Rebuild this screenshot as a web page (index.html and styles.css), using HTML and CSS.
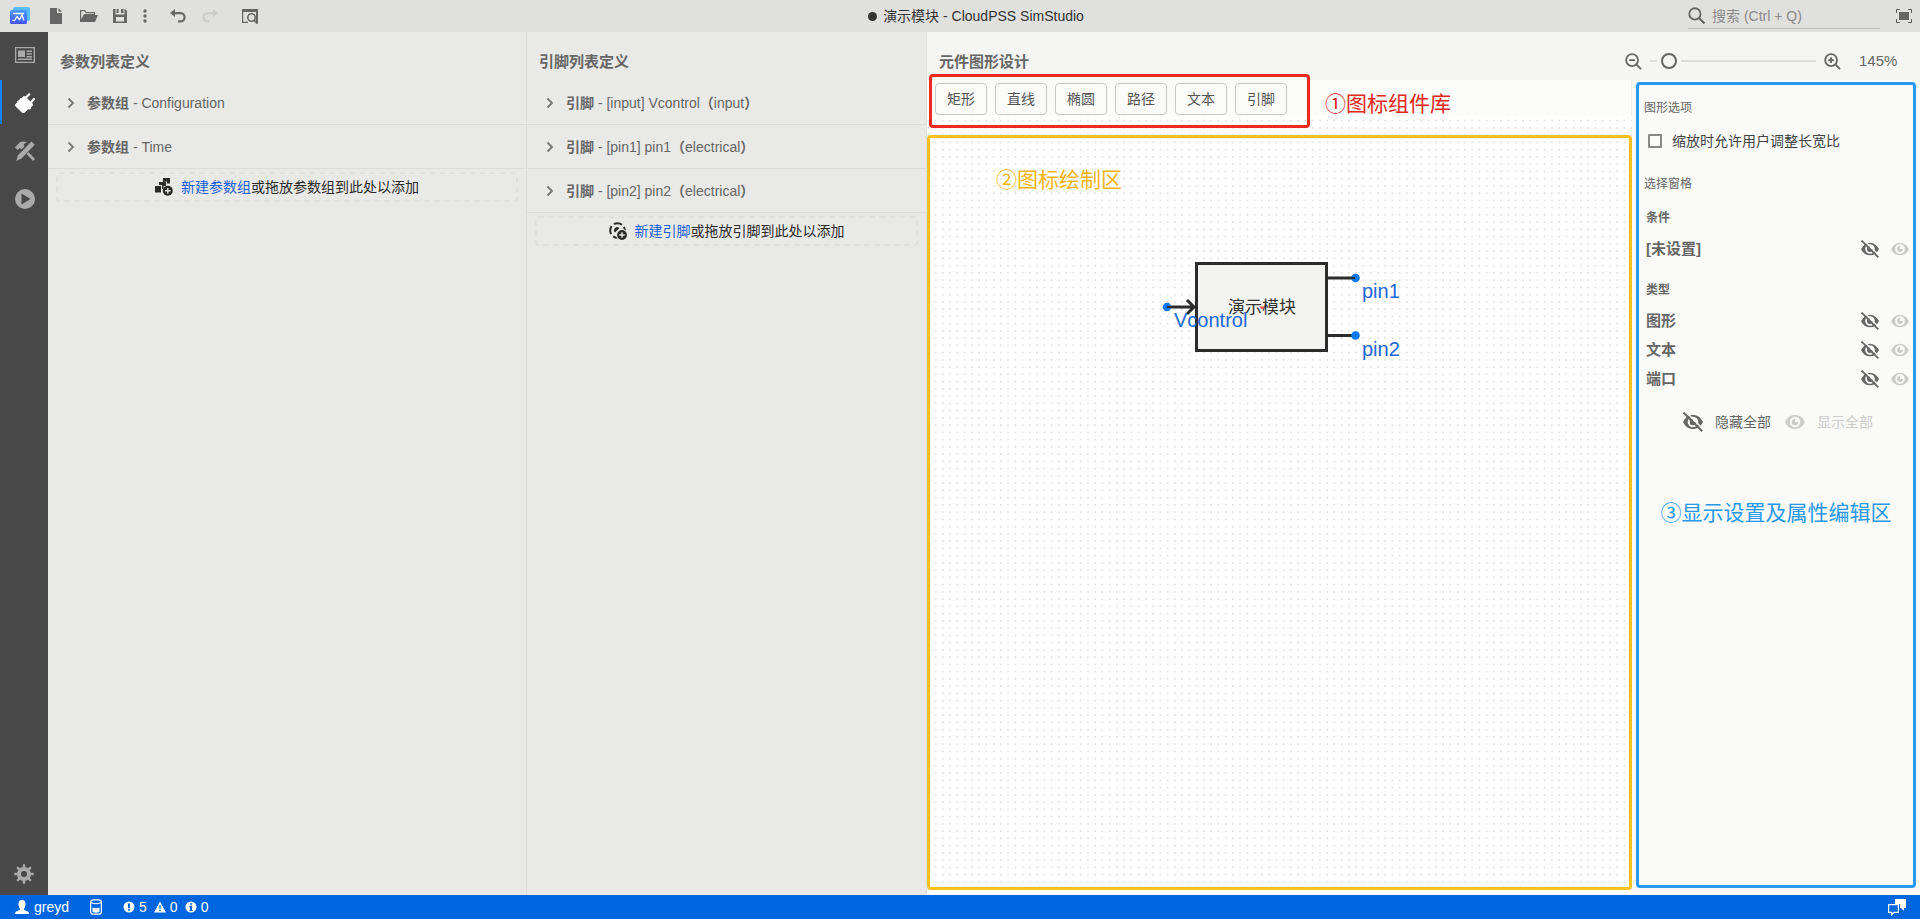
FILE: index.html
```html
<!DOCTYPE html>
<html lang="zh-CN">
<head>
<meta charset="utf-8">
<title>演示模块 - CloudPSS SimStudio</title>
<link rel="stylesheet" href="styles.css">
</head>
<body>
<svg class="sprite" aria-hidden="true">
  <symbol id="eye" viewBox="0 0 18 18">
    <path fill-rule="evenodd" d="M0 9C2 5 5 2.700 9 2.700S16 5 18 9c-2 4-5 6.300-9 6.300S2 13 0 9zM9 4.200a4.800 4.800 0 1 0 0 9.600 4.800 4.800 0 0 0 0-9.600z"/>
    <path d="M9 6v3h3A3 3 0 1 1 9 6z"/>
  </symbol>
  <symbol id="eye-off" viewBox="0 0 18 18">
    <use href="#eye"/>
    <path d="M2 -.7 18.500 15.800" stroke="#fafaf9" stroke-width="1.300"/>
    <path d="M.5.500 17.300 17.300" stroke="currentColor" stroke-width="1.800"/>
  </symbol>
  <symbol id="chevron" viewBox="0 0 8 12">
    <path d="M1.500 1.500 6 6l-4.500 4.500" fill="none" stroke="currentColor" stroke-width="1.800"/>
  </symbol>
</svg>

<div class="app">
  <header class="topbar">
    <nav class="tools" aria-label="工具栏">
      <svg class="logo" viewBox="0 0 20 18">
        <defs><linearGradient id="lg" x2="0" y2="1"><stop stop-color="#4a9bff"/><stop offset="1" stop-color="#4452f0"/></linearGradient></defs>
        <rect x="3" width="17" height="14" rx="2" fill="#56bdf9"/>
        <rect y="3" width="17" height="14" rx="1.500" fill="url(#lg)"/>
        <path d="M3 6.500h11M2.500 13.500h2l2.500-4 2.500 3 2.500-4.500 2 5.500" fill="none" stroke="#fff" stroke-width="1.300"/>
      </svg>
      <button class="tool new" aria-label="新建"><svg viewBox="0 0 16 16"><path d="M2 0h7v5h5v11H2zM10.500 0 14 3.700h-3.500z"/></svg></button>
      <button class="tool open" aria-label="打开"><svg viewBox="0 0 18 16"><path fill-rule="evenodd" d="M0 14V2h5l1.500 2H15v3h3l-3 7zM1.200 11.500 4 6h9.800V5.200H6L4.500 3.200H1.200z"/></svg></button>
      <button class="tool save" aria-label="保存"><svg viewBox="0 0 16 16"><path fill-rule="evenodd" d="M1 1h2.500v5.500h9V1H13l2 2v12H1zM4 9v4.500h8V9zM4.500 1h2v4h-2zM9 1h2.500v4H9z"/></svg></button>
      <button class="tool more" aria-label="更多"><svg viewBox="0 0 16 16"><circle cx="8" cy="3" r="1.700"/><circle cx="8" cy="8" r="1.700"/><circle cx="8" cy="13" r="1.700"/></svg></button>
      <button class="tool undo" aria-label="撤销"><svg viewBox="0 0 16 16"><path d="M0 5 5 1v8zM4 4h6.500a5.200 5.200 0 0 1 0 10.400H8v-2.200h2.500a3 3 0 0 0 0-6H4z"/></svg></button>
      <button class="tool redo" aria-label="重做" disabled><svg viewBox="0 0 16 16"><path d="M16 5 11 1v8zM12 4H5.500a5.200 5.200 0 0 0 0 10.400H7v-2.200H5.500a3 3 0 0 1 0-6H12z"/></svg></button>
      <button class="tool inspect" aria-label="预览"><svg viewBox="0 0 18 16"><path fill-rule="evenodd" d="M1 1h16v14h-2V4H2.200v9.800H7V15H1z"/><circle cx="10.500" cy="9.500" r="3.700" fill="none" stroke="currentColor" stroke-width="1.600"/><path d="m13 12 3.500 3.700" stroke="currentColor" stroke-width="1.800"/></svg></button>
    </nav>
    <h1 class="doc-title"><span class="dirty"></span>演示模块 - CloudPSS SimStudio</h1>
    <div class="top-right">
      <label class="search">
        <svg viewBox="0 0 16 16"><circle cx="6.500" cy="6.500" r="5.300" fill="none" stroke="currentColor" stroke-width="1.700"/><path d="m10.500 10.500 5 5" stroke="currentColor" stroke-width="2"/></svg>
        <input type="text" placeholder="搜索 (Ctrl + Q)" aria-label="搜索">
      </label>
      <button class="full" aria-label="全屏"><svg viewBox="0 0 16 14"><path d="M.5 4V.5H4M12 .5h3.500V4M15.500 10v3.500H12M4 13.500H.5V10" fill="none" stroke="currentColor" stroke-width="1.200"/><path d="M3 3h10v8H3z"/></svg></button>
    </div>
  </header>

  <div class="main">
    <nav class="rail" aria-label="导航">
      <button class="rail-item" aria-label="总览"><svg viewBox="0 0 20 20"><path fill-rule="evenodd" d="M0 2h20v16H0zm1.300 1.300v13.400h17.400V3.300z"/><path d="M3 5.500h7V12H3zM11.500 5.500H17V7h-5.500zM11.500 8.200H17v1.500h-5.500zM11.500 11H17v1.500h-5.500zM3 13.500h14V15H3z"/></svg></button>
      <button class="rail-item active" aria-label="接口"><svg viewBox="0 0 20 20"><path d="M5.500 5.500h1.500L8.500 3.500h1.500L17.500 11v1.500L15.500 14v2H13L9 19.700H7.500L.5 13v-1.500L2.500 9.500V8h1.500z" stroke="currentColor" stroke-width=".8" stroke-linejoin="round"/><path d="m10.500 5 3.700-3.700M15.500 10 19 6" fill="none" stroke="currentColor" stroke-width="2.200" stroke-linecap="round"/></svg></button>
      <button class="rail-item" aria-label="实现"><svg viewBox="0 0 20 20"><path d="M16.500.500 19.700 3.700 6.500 17.500 1.300 20 3 14.200z"/><path d="M0 6.500 4.500 1.500Q8-.5 12 1.500 9 2 8.500 4l1 1.500-3 3L5 7 2.500 9z"/><path d="m12.500 12 6.500 7" stroke="currentColor" stroke-width="2.600"/></svg></button>
      <button class="rail-item" aria-label="运行"><svg viewBox="0 0 20 20"><path fill-rule="evenodd" d="M10 0a10 10 0 1 1 0 20 10 10 0 0 1 0-20zM6.500 4.500v11l9-5.500z"/></svg></button>
      <button class="rail-item settings" aria-label="设置"><svg viewBox="0 0 20 20"><circle cx="10" cy="10" r="5" fill="none" stroke="currentColor" stroke-width="4"/><path d="M10 1.200v3M10 15.800v3M1.200 10h3M15.800 10h3M3.800 3.800l2 2M14.200 14.200l2 2M3.800 16.200l2-2M14.200 5.800l2-2" stroke="currentColor" stroke-width="2.400" stroke-linecap="round"/></svg></button>
    </nav>

    <section class="panel params">
      <h2 class="panel-title">参数列表定义</h2>
      <button class="group"><svg><use href="#chevron"/></svg><span><b>参数组</b> - Configuration</span></button>
      <button class="group"><svg><use href="#chevron"/></svg><span><b>参数组</b> - Time</span></button>
      <div class="drop">
        <svg viewBox="0 0 18 18"><path d="M0 8h6v6.500H0zM8 0h7v5.500H12V3.500L8 4zM4 4h7v4H8.500v3H7V7H4z"/><circle cx="12.800" cy="12.800" r="5"/><path d="M12.800 10v5.600M10 12.800h5.600" stroke="#e9e9e7" stroke-width="1.400"/></svg>
        <p><a href="#">新建参数组</a>或拖放参数组到此处以添加</p>
      </div>
    </section>

    <section class="panel pins">
      <h2 class="panel-title">引脚列表定义</h2>
      <button class="group"><svg><use href="#chevron"/></svg><span><b>引脚</b> - [input] Vcontrol<b>（</b>input<b>）</b></span></button>
      <button class="group"><svg><use href="#chevron"/></svg><span><b>引脚</b> - [pin1] pin1<b>（</b>electrical<b>）</b></span></button>
      <button class="group"><svg><use href="#chevron"/></svg><span><b>引脚</b> - [pin2] pin2<b>（</b>electrical<b>）</b></span></button>
      <div class="drop">
        <svg viewBox="0 0 18 18"><circle cx="8.500" cy="8.500" r="7.300" fill="none" stroke="currentColor" stroke-width="2" stroke-dasharray="8.500 3" stroke-dashoffset="4"/><path d="M6 10.500a3 3 0 0 1 4.500-4.500z"/><circle cx="13" cy="13" r="6" fill="#e9e9e7"/><circle cx="13" cy="13" r="4.900"/><path d="M13 10.300v5.400M10.300 13h5.400" stroke="#e9e9e7" stroke-width="1.400"/></svg>
        <p><a href="#">新建引脚</a>或拖放引脚到此处以添加</p>
      </div>
    </section>

    <section class="design">
      <header class="design-head">
        <h2>元件图形设计</h2>
        <div class="zoom">
          <button aria-label="缩小"><svg viewBox="0 0 18 18"><circle cx="7.500" cy="7.500" r="6.300" fill="none" stroke="currentColor" stroke-width="1.900"/><path d="m12 12 5 5M4.500 7.500h6" stroke="currentColor" stroke-width="2"/></svg></button>
          <input type="range" min="0" max="100" value="7" aria-label="缩放">
          <button aria-label="放大"><svg viewBox="0 0 18 18"><circle cx="7.500" cy="7.500" r="6.300" fill="none" stroke="currentColor" stroke-width="1.900"/><path d="m12 12 5 5M4.500 7.500h6M7.500 4.500v6" stroke="currentColor" stroke-width="2"/></svg></button>
          <output>145%</output>
        </div>
      </header>
      <div class="design-body">
        <div class="stage">
          <div class="palette">
            <button>矩形</button><button>直线</button><button>椭圆</button><button>路径</button><button>文本</button><button>引脚</button>
          </div>
          <svg class="canvas" role="img" aria-label="演示模块">
            <defs><pattern id="dots" width="5" height="5" patternUnits="userSpaceOnUse" patternTransform="translate(5 1) scale(1.45)"><circle cx="2.500" cy="2.500" r=".7" fill="#dededc"/></pattern></defs>
            <rect width="100%" height="100%" fill="url(#dots)"/>
            <g class="wire">
              <rect x="269.500" y="147.500" width="130" height="87"/>
              <path d="M240 191h28M260 184l7 7-7 7M401 162h28M401 219.500h28"/>
            </g>
            <circle class="port" cx="240" cy="191" r="4.300"/>
            <circle class="port" cx="428.500" cy="162" r="4.300"/>
            <circle class="port" cx="428.500" cy="219.500" r="4.300"/>
            <path class="wire wire-end" d="M240 191h6M422 162h6"/>
            <text class="block-name" x="335" y="197">演示模块</text>
            <path d="m332.500 190.500 2.500 3 2.500-3z" fill="#ff4a3a"/>
            <text class="pin-name" x="247" y="211">Vcontrol</text>
            <text class="pin-name" x="435" y="182">pin1</text>
            <text class="pin-name" x="435" y="240">pin2</text>
          </svg>
          <div class="mark mark-library"></div>
          <div class="mark mark-canvas"></div>
          <p class="note note-library">①图标组件库</p>
          <p class="note note-canvas">②图标绘制区</p>
        </div>

        <aside class="props">
          <h3>图形选项</h3>
          <label class="check"><input type="checkbox">缩放时允许用户调整长宽比</label>
          <h3 class="next">选择窗格</h3>
          <h4>条件</h4>
          <div class="item first"><span>[未设置]</span><button aria-label="隐藏"><svg><use href="#eye-off"/></svg></button><button disabled aria-label="显示"><svg><use href="#eye"/></svg></button></div>
          <h4 class="types">类型</h4>
          <div class="item"><span>图形</span><button aria-label="隐藏"><svg><use href="#eye-off"/></svg></button><button disabled aria-label="显示"><svg><use href="#eye"/></svg></button></div>
          <div class="item"><span>文本</span><button aria-label="隐藏"><svg><use href="#eye-off"/></svg></button><button disabled aria-label="显示"><svg><use href="#eye"/></svg></button></div>
          <div class="item"><span>端口</span><button aria-label="隐藏"><svg><use href="#eye-off"/></svg></button><button disabled aria-label="显示"><svg><use href="#eye"/></svg></button></div>
          <div class="all">
            <button><svg><use href="#eye-off"/></svg>隐藏全部</button>
            <button disabled><svg><use href="#eye"/></svg>显示全部</button>
          </div>
          <p class="note note-props">③显示设置及属性编辑区</p>
          <div class="mark mark-props"></div>
        </aside>
      </div>
    </section>
  </div>

  <footer class="status">
    <button class="user"><svg viewBox="0 0 14 14"><path d="M7 0c2.500 0 3.500 1.500 3.500 4S9.500 8 8.800 9c0 1 .7 1.200 2.200 1.700 2 .6 3 1 3 3.300H0c0-2.300 1-2.700 3-3.300 1.500-.5 2.200-.7 2.200-1.700C4.500 8 3.500 6.500 3.500 4S4.500 0 7 0z"/></svg>greyd</button>
    <button class="db" aria-label="存储"><svg viewBox="0 0 12 16"><g fill="none" stroke="currentColor" stroke-width="1.200"><rect x=".6" y=".8" width="10.800" height="14.400" rx="2.500"/><path d="M1 3.500q5 2.500 10 0"/></g><path d="M2.500 8.500q3.500 1.500 7 0V13q-3.500 1.500-7 0z"/></svg></button>
    <button class="counts">
      <svg viewBox="0 0 12 12"><path fill-rule="evenodd" d="M6 .5a5.500 5.500 0 1 1 0 11 5.500 5.500 0 0 1 0-11zM5 2.500v4.700h2V2.500zM5 8.200v1.600h2V8.200z"/></svg><span>5</span>
      <svg viewBox="0 0 12 12"><path fill-rule="evenodd" d="M6 .5 12 11.500H0zM5.300 4.500v3.200h1.400V4.500zM5.300 8.700V10h1.400V8.700z"/></svg><span>0</span>
      <svg viewBox="0 0 12 12"><path fill-rule="evenodd" d="M6 .5a5.500 5.500 0 1 1 0 11 5.500 5.500 0 0 1 0-11zM5 2.200v1.600h2V2.200zM4.300 4.800V6H5v3h-.7v1h3.400V9H7V4.800z"/></svg><span>0</span>
    </button>
    <button class="chat" aria-label="消息"><svg viewBox="0 0 18 17"><path d="M7 0h11v9h-2v3l-3-3h-1V5H7z"/><path d="M.6 5.600h9.800v7.800H6l-2.300 2.400v-2.400H.6z" fill="none" stroke="currentColor" stroke-width="1.200"/></svg></button>
  </footer>
</div>
</body>
</html>
```
FILE: styles.css
```css
* { box-sizing: border-box; }
body, h1, h2, h3, h4, p { margin: 0; }
body {
  font: 14px/20px "Liberation Sans", "Noto Sans CJK SC", sans-serif;
  color: #333;
  background: #e9e9e7;
}
svg { display: block; fill: currentColor; }
button, input { font: inherit; color: inherit; margin: 0; }
button { display: flex; align-items: center; padding: 0; border: 0; background: none; }
a { color: #1a5fd8; text-decoration: none; }
.sprite { position: absolute; width: 0; height: 0; }
.app { display: flex; flex-direction: column; height: 100vh; }

/* Top bar */
.topbar { display: flex; align-items: center; height: 32px; background: #e0e0de; color: #666; }
.tools { display: flex; align-items: center; width: 272px; padding-left: 10px; }
.logo { width: 20px; height: 18px; }
.tool svg { width: 16px; height: 16px; }
.new { margin-left: 18px; }
.open { margin-left: 16px; }
.open svg, .inspect svg { width: 18px; }
.save { margin-left: 14px; }
.more { margin-left: 9px; }
.undo { margin-left: 17px; }
.redo { margin-left: 16px; color: #ccc; }
.inspect { margin-left: 23px; }
.doc-title { flex: 1; display: flex; align-items: center; justify-content: center; gap: 6px; font-size: 14px; line-height: 20px; font-weight: 400; color: #333; }
.dirty { width: 9px; height: 9px; border-radius: 50%; background: #333; }
.top-right { display: flex; align-items: center; width: 240px; padding: 0 8px; }
.search { display: flex; align-items: center; gap: 7px; width: 192px; height: 26px; border-bottom: 1px solid #bbb; }
.search svg { width: 17px; height: 17px; }
.search input { flex: 1; min-width: 0; padding: 0; border: 0; background: none; outline: 0; }
.search input::placeholder { color: #8a8a8a; opacity: 1; }
.full { margin-left: 16px; }
.full svg { width: 16px; height: 14px; }

/* Main area */
.main { flex: 1; display: flex; min-height: 0; }
.rail { display: flex; flex-direction: column; gap: 4px; width: 48px; background: #484848; color: #aaa; }
.rail-item { justify-content: center; height: 44px; padding-top: 2px; border-left: 2px solid transparent; }
.rail-item svg { width: 20px; height: 20px; }
.active { color: #fff; border-left-color: #1580ff; }
.settings { margin-top: auto; padding-right: 2px; }

.panel { background: #e9e9e7; color: #666; border-right: 1px solid #dededc; }
.params { flex: 478; }
.pins { flex: 399; }
.panel-title { height: 49px; padding: 19px 12px 0; font-size: 15px; line-height: 22px; font-weight: 700; }
.group { gap: 12px; width: 100%; height: 44px; padding-left: 19px; border-bottom: 1px solid #dcdcda; }
.group svg { width: 8px; height: 12px; color: #777; }
.drop { display: flex; align-items: center; justify-content: center; gap: 8px; height: 30px; margin: 3px 8px; border: 2px dashed #e1e1df; border-radius: 3px; color: #2a2a2a; }
.drop svg { width: 18px; height: 18px; }

/* Design area */
.design { flex: 993; display: flex; flex-direction: column; background: #fff; color: #555; min-width: 0; }
.design-head { display: flex; justify-content: space-between; height: 48px; padding: 19px 12px 0; background: #f5f5f3; color: #666; }
.design-head h2 { font-size: 15px; line-height: 22px; font-weight: 700; }
.zoom { display: flex; align-items: center; height: 20px; gap: 8px; font-size: 15px; }
.zoom svg { width: 17px; height: 17px; }
.zoom output { width: 59px; padding-left: 10px; }
.zoom input { appearance: none; width: 166px; height: 16px; background: none; }
.zoom input::-webkit-slider-runnable-track { height: 2px; background: #ddddda; }
.zoom input::-webkit-slider-thumb { appearance: none; width: 16px; height: 16px; margin-top: -7px; border: 2px solid #666; border-radius: 50%; background: #f5f5f3; box-shadow: 0 0 0 4px #f5f5f3; }
.design-body { flex: 1; display: flex; min-height: 0; }
.stage { flex: 1; position: relative; display: flex; flex-direction: column; min-width: 0; }
.palette { display: flex; gap: 8px; height: 36px; padding: 3px 8px 1px; background: #fbfbfa; border-right: 1px solid #eee; }
.palette button { justify-content: center; width: 52px; border: 1px solid #c8c8c6; border-radius: 4px; }
.canvas { flex: 1; width: 100%; min-height: 0; }
.wire { fill: none; stroke: #2c2c2c; stroke-width: 3; }
.wire-end { stroke-width: 2; }
.wire rect { fill: #f3f3f2; }
.port { fill: #0a78f0; }
.block-name { font-size: 17px; text-anchor: middle; fill: #333; }
.pin-name { font-size: 20px; fill: #2068d8; }

/* Guide frames and notes */
.mark { position: absolute; border: 3px solid; border-radius: 4px; pointer-events: none; }
.mark-library { top: -6px; left: 2px; width: 381px; height: 54px; color: #ee2a1c; }
.mark-canvas { top: 55px; left: 0; right: 0; bottom: 5px; color: #fac11c; }
.mark-props { top: 2px; left: 4px; right: 4px; bottom: 7px; color: #2898f0; }
.note { position: absolute; font-size: 21px; line-height: 28px; white-space: nowrap; }
.note-library { top: 10px; left: 398px; color: #e0281c; }
.note-canvas { top: 86px; left: 69px; color: #f5b50f; }
.note-props { top: 419px; left: 0; right: 0; text-align: center; color: #2898e8; }

/* Properties */
.props { position: relative; width: 288px; padding: 16px 11px 0 12px; background: #fafaf9; color: #666; }
.props h3, .props h4 { font-size: 12px; line-height: 24px; font-weight: 400; }
.props h4 { margin-top: 10px; padding-left: 2px; font-weight: 700; }
.props .next { margin-top: 10px; }
.props .types { margin: 15px 0 4px; }
.check { display: flex; align-items: center; gap: 10px; height: 42px; padding-left: 4px; color: #444; }
.check input { appearance: none; width: 14px; height: 14px; border: 2px solid #888; border-radius: 1px; }
.item { display: flex; align-items: center; gap: 12px; height: 29px; padding-left: 2px; font-size: 15px; font-weight: 700; }
.item span { flex: 1; }
.item svg { width: 18px; height: 18px; }
.first { margin-top: 4px; }
.props button:disabled { color: #ccc; }
.all { display: flex; justify-content: center; gap: 14px; margin-top: 14px; height: 30px; padding-left: 3px; }
.all button { gap: 12px; }
.all svg { width: 20px; height: 20px; }

/* Status bar */
.status { display: flex; align-items: center; height: 24px; padding: 0 14px 0 15px; background: #0066e0; color: #fff; }
.user { gap: 5px; }
.user svg { width: 14px; height: 14px; }
.db { margin-left: 21px; }
.db svg { width: 12px; height: 16px; }
.counts { margin-left: 21px; gap: 4px; }
.counts svg { width: 12px; height: 12px; }
.counts span { margin-right: 3px; }
.chat { margin-left: auto; }
.chat svg { width: 18px; height: 17px; }
```
